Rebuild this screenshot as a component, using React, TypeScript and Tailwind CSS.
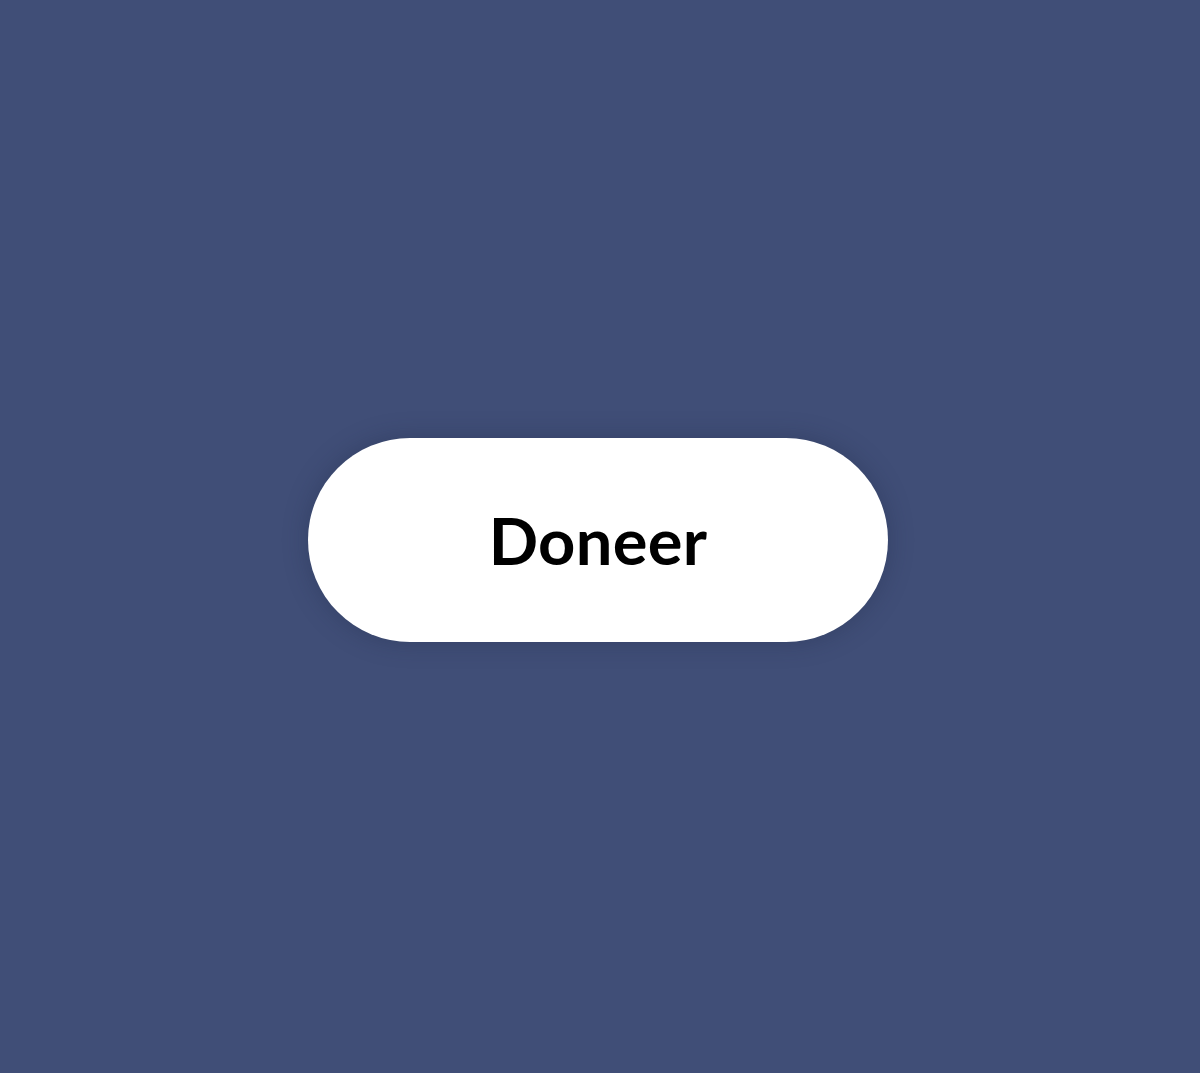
export default function App() {
  return (
    <div className="w-[1200px] h-[1073px] bg-[#404e77] flex items-center justify-center">
      <button className="w-[580px] h-[204px] ml-[-4px] mt-[7px] rounded-full bg-white shadow-[0_0_24px_rgba(30,40,70,0.35)] flex items-center justify-center">
        <span className="pt-[0px] text-[65px] font-bold text-black leading-none tracking-[0.005em]" style={{ fontFamily: 'Lato, "Noto Sans", sans-serif' }}>
          Doneer
        </span>
      </button>
    </div>
  );
}
